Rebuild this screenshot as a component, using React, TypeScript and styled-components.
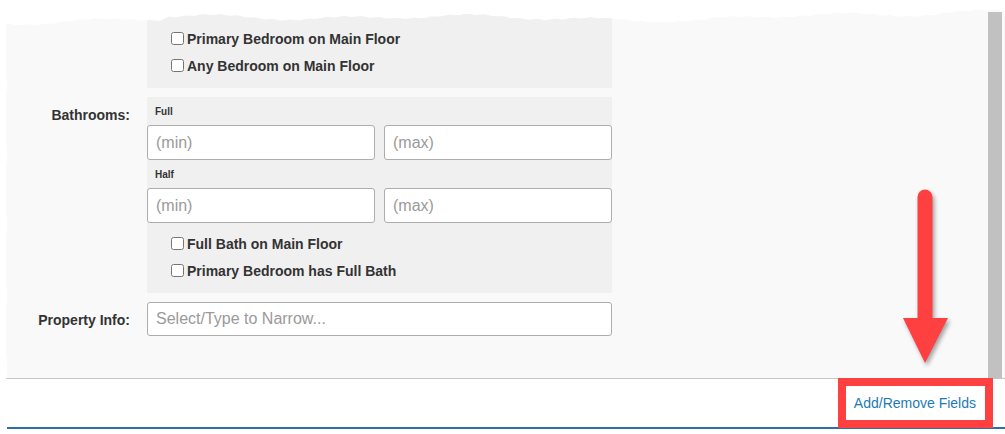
import React, { FC } from "react";
import styled, { createGlobalStyle } from "styled-components";

const GlobalStyle = createGlobalStyle`
  html, body {
    margin: 0;
    padding: 0;
    background: #ffffff;
  }
  body {
    font-family: "Liberation Sans", Arial, sans-serif;
  }
`;

const Frame = styled.div`
  position: relative;
  width: 1005px;
  height: 434px;
  overflow: hidden;
  background: #ffffff;
`;

const Panel = styled.div`
  display: flex;
  height: 378px;
  margin-left: 6px;
  background: #f9f9f9;
  border-bottom: 1px solid #c6c6c6;
`;

const FormArea = styled.div`
  flex: 1;
  display: flex;
  flex-direction: column;
  gap: 9px;
`;

const Scrollbar = styled.div`
  width: 14px;
  margin: 12px 3px 0 0;
  background: #c1c1c1;
`;

const Row = styled.div`
  display: grid;
  grid-template-columns: 141px 465px;
`;

const RowLabel = styled.div<{ $top: number }>`
  padding: ${({ $top }) => $top}px 17px 0 0;
  text-align: right;
  font-size: 14px;
  font-weight: 700;
  color: #333333;
`;

const Group = styled.div`
  background: #f0f0f0;
`;

const SubLabel = styled.div`
  height: 28px;
  box-sizing: border-box;
  padding: 9px 0 0 8px;
  font-size: 10px;
  font-weight: 700;
  color: #333333;
`;

const InputPair = styled.div`
  display: grid;
  grid-template-columns: 1fr 1fr;
  gap: 9px;
`;

const TextInput = styled.input<{ $height?: number }>`
  box-sizing: border-box;
  width: 100%;
  height: ${({ $height }) => $height ?? 35}px;
  margin: 0;
  padding: 0 8px;
  background: #ffffff;
  border: 1px solid #adadad;
  border-radius: 3px;
  font-family: "Liberation Sans", Arial, sans-serif;
  font-size: 16px;
  color: #333333;
  outline: none;

  &::placeholder {
    color: #9a9a9a;
  }
`;

const CheckList = styled.div<{ $top: number; $bottom: number }>`
  padding: ${({ $top, $bottom }) => `${$top}px 0 ${$bottom}px 24px`};
`;

const CheckRow = styled.label`
  display: flex;
  align-items: center;
  height: 27px;
  font-size: 14px;
  font-weight: 700;
  color: #333333;
`;

const Box = styled.input`
  width: 13px;
  height: 13px;
  margin: 0 3px 0 0;
`;

const Footer = styled.div`
  display: flex;
  justify-content: flex-end;
  align-items: center;
  height: 48px;
  margin-left: 7px;
  padding-right: 19px;
  border-bottom: 2px solid #2f6ea8;
`;

const FieldsLink = styled.a`
  padding: 7px 10px 7px 7px;
  background: #ffffff;
  font-size: 14px;
  color: #1d7ab5;
  text-decoration: none;
  cursor: pointer;
`;

const Callout = styled.div`
  position: absolute;
  left: 838px;
  top: 378px;
  width: 155px;
  height: 50px;
  box-sizing: border-box;
  border: 8px solid #ff4040;
  pointer-events: none;
`;

const ArrowSvg = styled.svg`
  position: absolute;
  left: 895px;
  top: 180px;
  filter: drop-shadow(2px 3px 2px rgba(0, 0, 0, 0.35));
  pointer-events: none;
`;

const TornEdge = styled.svg`
  position: absolute;
  left: 0;
  top: 0;
  pointer-events: none;
`;

const Check: FC<{ label: string }> = ({ label }) => (
  <CheckRow>
    <Box type="checkbox" />
    {label}
  </CheckRow>
);

// jagged paper edge along the top and left side
const tornPath = () => {
  const pts: string[] = ["M0,0", "L1005,0"];
  const levels = [
    [0, 22], [160, 20], [170, 17], [330, 17], [600, 18], [700, 21], [820, 15], [1005, 11],
  ];
  const base = (x: number) => {
    for (let i = 1; i < levels.length; i++) {
      const [x0, y0] = levels[i - 1];
      const [x1, y1] = levels[i];
      if (x <= x1) return y0 + ((y1 - y0) * (x - x0)) / (x1 - x0);
    }
    return 12;
  };
  for (let x = 1005; x >= 0; x -= 5) {
    const n = Math.sin(x * 0.05) * 1.8 + Math.sin(x * 0.021 + 1.3) * 1.5 + Math.cos(x * 0.9) * 0.6;
    pts.push(`L${x},${(base(x) + n).toFixed(1)}`);
  }
  for (let y = 24; y <= 434; y += 8) {
    const n = 5 + Math.sin(y * 0.09) * 1.5 + Math.cos(y * 0.7) * 0.8;
    pts.push(`L${n.toFixed(1)},${y}`);
  }
  pts.push("L0,434", "Z");
  return pts.join(" ");
};

const App: FC = () => {
  return (
    <>
      <GlobalStyle />
      <Frame>
        <Panel>
          <FormArea>
            <Row>
              <RowLabel $top={0} />
              <Group>
                <CheckList $top={25} $bottom={9}>
                  <Check label="Primary Bedroom on Main Floor" />
                  <Check label="Any Bedroom on Main Floor" />
                </CheckList>
              </Group>
            </Row>
            <Row>
              <RowLabel $top={10}>Bathrooms:</RowLabel>
              <Group>
                <SubLabel>Full</SubLabel>
                <InputPair>
                  <TextInput placeholder="(min)" />
                  <TextInput placeholder="(max)" />
                </InputPair>
                <SubLabel>Half</SubLabel>
                <InputPair>
                  <TextInput placeholder="(min)" />
                  <TextInput placeholder="(max)" />
                </InputPair>
                <CheckList $top={7} $bottom={9}>
                  <Check label="Full Bath on Main Floor" />
                  <Check label="Primary Bedroom has Full Bath" />
                </CheckList>
              </Group>
            </Row>
            <Row>
              <RowLabel $top={10}>Property Info:</RowLabel>
              <TextInput $height={34} placeholder="Select/Type to Narrow..." />
            </Row>
          </FormArea>
          <Scrollbar />
        </Panel>
        <Footer>
          <FieldsLink>Add/Remove Fields</FieldsLink>
        </Footer>

        <TornEdge width="1005" height="434" viewBox="0 0 1005 434">
          <path d={tornPath()} fill="#ffffff" />
        </TornEdge>

        <Callout />

        <ArrowSvg width="60" height="190" viewBox="0 0 60 190">
          <line x1="30" y1="17" x2="30" y2="145" stroke="#ff4040" strokeWidth="15" strokeLinecap="round" />
          <polygon points="8,138 53,138 30,183" fill="#ff4040" />
        </ArrowSvg>
      </Frame>
    </>
  );
};

export default App;
